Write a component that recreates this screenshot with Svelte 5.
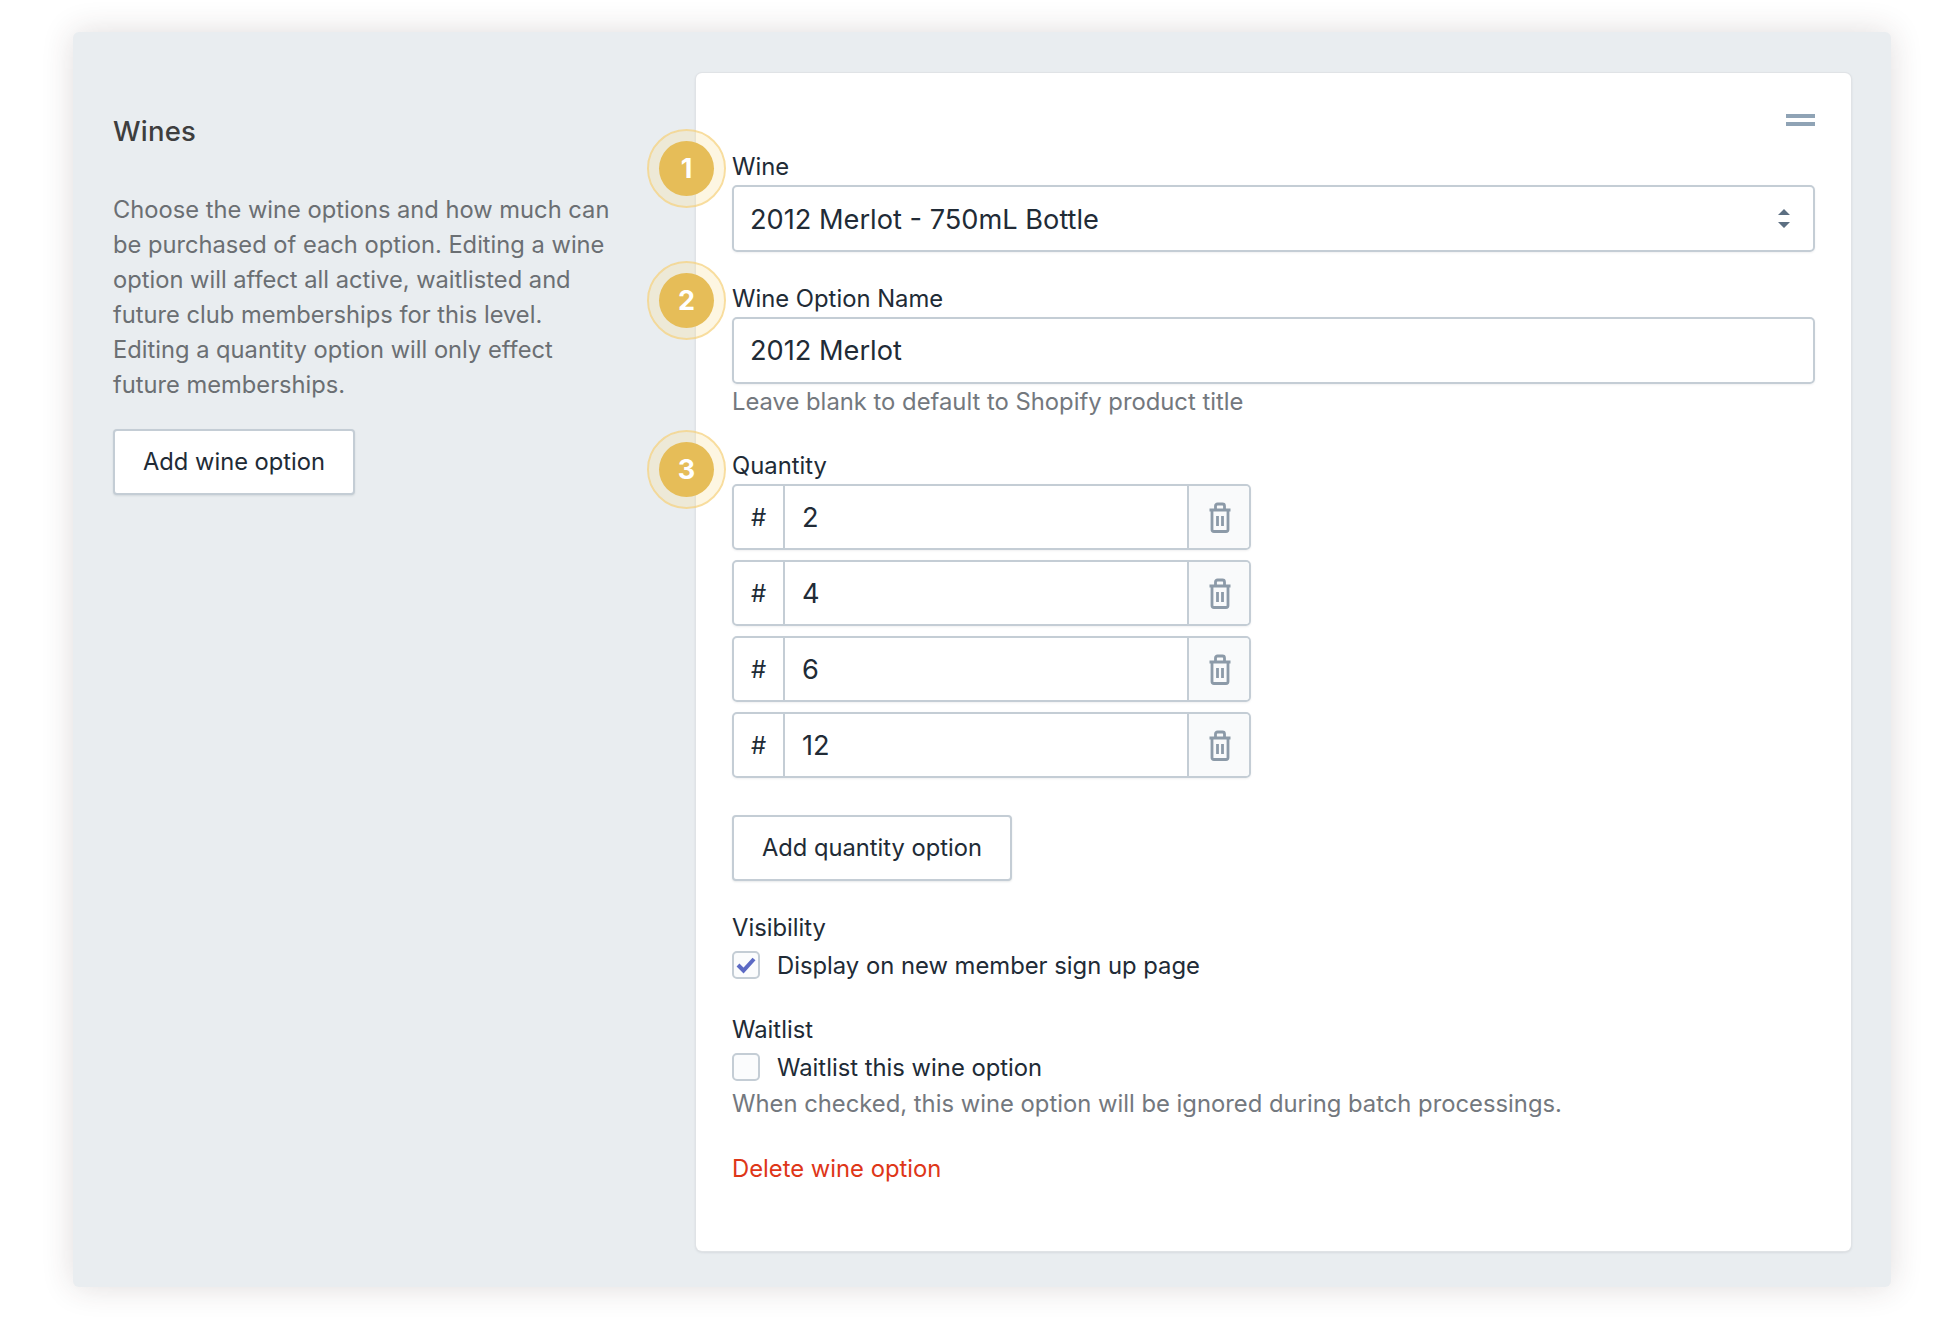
<script lang="ts">
	const quantities = ['2', '4', '6', '12'];
</script>

<div class="page">
	<section class="panel">
		<aside class="intro">
			<h2>Wines</h2>
			<p>Choose the wine options and how much can be purchased of each option. Editing a wine option will affect all active, waitlisted and future club memberships for this level. Editing a quantity option will only effect future memberships.</p>
			<button class="btn">Add wine option</button>
		</aside>

		<div class="card">
			<div class="handle"><span></span><span></span></div>

			<div class="field first">
				<span class="badge">1</span>
				<div class="label">Wine</div>
				<div class="input select">
					<span>2012 Merlot - 750mL Bottle</span>
					<svg width="14" height="21" viewBox="0 0 14 21"><path d="M7 1l6 6H1zM7 20l-6-6h12z" fill="#5c6f82" /></svg>
				</div>
			</div>

			<div class="field second">
				<span class="badge">2</span>
				<div class="label">Wine Option Name</div>
				<div class="input"><span>2012 Merlot</span></div>
				<div class="hint">Leave blank to default to Shopify product title</div>
			</div>

			<div class="field third">
				<span class="badge">3</span>
				<div class="label">Quantity</div>
				<div class="rows">
					{#each quantities as q}
						<div class="row">
							<div class="hash">#</div>
							<div class="qty">{q}</div>
							<div class="trash">
								<svg width="24" height="31" viewBox="0 0 24 31" fill="none" stroke="#8c9aa8" stroke-width="2.8">
									<path d="M1.500 8h21M4 8v19.500A2 2 0 0 0 6 29.500h12a2 2 0 0 0 2-2V8M7.500 7.500V4A2 2 0 0 1 9.500 2h5a2 2 0 0 1 2 2v3.500M9.500 14v10M14.500 14v10" />
								</svg>
							</div>
						</div>
					{/each}
				</div>
			</div>

			<button class="btn add-qty">Add quantity option</button>

			<div class="field visibility">
				<div class="label">Visibility</div>
				<div class="check">
					<span class="box">
						<svg width="20" height="18" viewBox="0 0 20 18" fill="none"><path d="M2 9l5.500 5.500L18 3" stroke="#5c6ac4" stroke-width="4" /></svg>
					</span>
					Display on new member sign up page
				</div>
			</div>

			<div class="field waitlist">
				<div class="label">Waitlist</div>
				<div class="check"><span class="box"></span>Waitlist this wine option</div>
				<div class="hint">When checked, this wine option will be ignored during batch processings.</div>
			</div>

			<div class="delete">Delete wine option</div>
		</div>
	</section>
</div>

<style>
	:global(body) {
		background: #fff;
		font-family: Inter, 'Liberation Sans', sans-serif;
	}

	.page {
		height: 1320px;
		padding: 32px 69px 33px 73px;
		box-sizing: border-box;
	}

	.panel {
		height: 100%;
		box-sizing: border-box;
		background: #e9edf0;
		border-radius: 6px;
		box-shadow: 0 0 32px rgba(60, 40, 40, 0.16);
		display: flex;
		padding: 41px 40px 36px 40px;
		gap: 57px;
	}

	.intro {
		width: 526px;
		flex: none;
	}

	h2 {
		margin: 40px 0 0;
		font-size: 27.5px;
		line-height: 36px;
		font-weight: 500;
		color: #3e3e3e;
		letter-spacing: 0.2px;
	}

	.intro p {
		margin: 43px 0 0;
		max-width: 505px;
		font-size: 23.7px;
		line-height: 35px;
		color: #6b6f73;
	}

	.btn {
		display: block;
		height: 66px;
		padding: 0 28px 2px;
		background: #fff;
		border: 2px solid #c4cdd5;
		border-radius: 4px;
		box-shadow: 0 1px 2px rgba(60, 70, 80, 0.12);
		font: inherit;
		font-size: 23.7px;
		color: #212b36;
	}

	.intro .btn {
		margin-top: 27px;
	}

	.card {
		flex: 1;
		background: #fff;
		border-radius: 6px;
		box-shadow: 0 0 0 1px #e0e3e6, 0 1px 3px rgba(60, 70, 80, 0.2);
		padding: 0 36px;
		position: relative;
		font-size: 23.8px;
		color: #212b36;
	}

	.handle {
		position: absolute;
		top: 41px;
		right: 36px;
		display: flex;
		flex-direction: column;
		gap: 4px;
	}

	.handle span {
		display: block;
		width: 29px;
		height: 4px;
		background: #8fa3b5;
	}

	.field {
		position: relative;
	}

	.first {
		padding-top: 76px;
	}

	.second {
		padding-top: 29px;
	}

	.third {
		padding-top: 28px;
	}

	.label {
		line-height: 36px;
		font-size: 23.8px;
	}

	.input {
		height: 67px;
		box-sizing: border-box;
		border: 2px solid #c4cdd5;
		border-radius: 5px;
		padding: 0 16px;
		display: flex;
		align-items: center;
		justify-content: space-between;
		font-size: 27.2px;
		box-shadow: 0 1px 2px rgba(60, 70, 80, 0.08);
	}

	.select {
		padding-top: 2px;
	}

	.select svg {
		margin-right: 6px;
		margin-top: -2px;
	}

	.hint {
		font-size: 23.8px;
		line-height: 36px;
		color: #73787e;
	}

	.badge {
		position: absolute;
		left: -73px;
		width: 55px;
		height: 55px;
		border-radius: 50%;
		background: #e6bd58;
		color: #fff;
		font-size: 27px;
		font-weight: 700;
		display: flex;
		align-items: center;
		justify-content: center;
		box-shadow: 0 0 0 10px rgba(250, 225, 160, 0.3);
	}

	.badge::after {
		content: '';
		position: absolute;
		inset: -12px;
		border: 2px solid rgba(245, 210, 125, 0.75);
		border-radius: 50%;
	}

	.first .badge {
		top: 68px;
	}

	.second .badge {
		top: 21px;
	}

	.third .badge {
		top: 22px;
	}

	.rows {
		display: flex;
		flex-direction: column;
		gap: 10px;
	}

	.row {
		width: 519px;
		height: 66px;
		box-sizing: border-box;
		border: 2px solid #c4cdd5;
		border-radius: 5px;
		display: flex;
		box-shadow: 0 1px 2px rgba(60, 70, 80, 0.08);
	}

	.hash {
		width: 49px;
		flex: none;
		display: flex;
		align-items: center;
		justify-content: center;
		border-right: 2px solid #c4cdd5;
		font-size: 24px;
	}

	.qty {
		flex: 1;
		display: flex;
		align-items: center;
		padding-left: 17px;
		font-size: 27.2px;
	}

	.trash {
		width: 62px;
		flex: none;
		border-left: 2px solid #c4cdd5;
		background: #f9fafb;
		border-radius: 0 4px 4px 0;
		display: flex;
		align-items: center;
		justify-content: center;
		padding-left: 2px;
		box-sizing: border-box;
	}

	.add-qty {
		margin-top: 37px;
	}

	.visibility {
		padding-top: 29px;
	}

	.waitlist {
		padding-top: 28px;
	}

	.check {
		display: flex;
		align-items: center;
		gap: 17px;
		height: 38px;
		font-size: 23.8px;
	}

	.box {
		width: 28px;
		height: 28px;
		box-sizing: border-box;
		border: 2px solid #c4cdd5;
		border-radius: 5px;
		background: #fbfcfd;
		display: flex;
		align-items: center;
		justify-content: center;
		flex: none;
	}

	.delete {
		margin-top: 29px;
		font-size: 23.8px;
		line-height: 36px;
		color: #de3618;
	}
</style>
